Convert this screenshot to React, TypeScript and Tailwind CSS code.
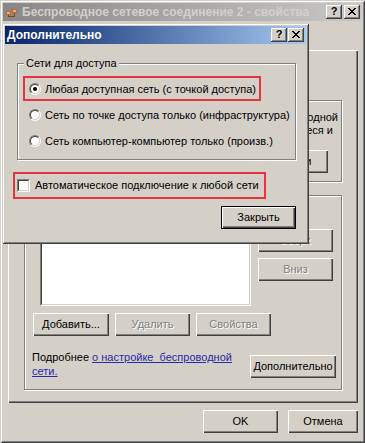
import React from "react";

function CapBtn({ kind }: { kind: "help" | "close" }) {
  const xPix: [number, number, number][] = [
    [0, 0, 2], [6, 0, 2],
    [1, 1, 2], [5, 1, 2],
    [2, 2, 4],
    [3, 3, 2],
    [2, 4, 4],
    [1, 5, 2], [5, 5, 2],
    [0, 6, 2], [6, 6, 2],
  ];
  return (
    <div className="w-[16px] h-[14px] bg-[#d4d0c8] flex items-center justify-center shadow-[inset_-1px_-1px_0_#404040,inset_1px_1px_0_#ffffff,inset_-2px_-2px_0_#808080]">
      {kind === "help" ? (
        <span className="font-bold text-[11px] leading-none text-black -mt-[1px]">?</span>
      ) : (
        <svg width="8" height="7" viewBox="0 0 8 7" shapeRendering="crispEdges" className="-mt-[1px]">
          {xPix.map(([x, y, w], i) => (
            <rect key={i} x={x} y={y} width={w} height={1} fill="#000" />
          ))}
        </svg>
      )}
    </div>
  );
}

function NetIcon() {
  return (
    <svg width="13" height="12" viewBox="0 0 13 12" shapeRendering="crispEdges">
      <rect x="1" y="5" width="5" height="4" fill="#c8661e" />
      <rect x="2" y="6" width="3" height="2" fill="#f2b36b" />
      <rect x="7" y="3" width="5" height="4" fill="#c8661e" />
      <rect x="8" y="4" width="3" height="2" fill="#f2b36b" />
      <rect x="3" y="9" width="1" height="2" fill="#7a4a22" />
      <rect x="9" y="7" width="1" height="4" fill="#7a4a22" />
      <rect x="3" y="10" width="7" height="1" fill="#7a4a22" />
    </svg>
  );
}

function Btn({
  label,
  className = "",
  disabled = false,
  def = false,
}: {
  label?: React.ReactNode;
  className?: string;
  disabled?: boolean;
  def?: boolean;
}) {
  const inner = (
    <div
      className={`h-full w-full flex items-center justify-center whitespace-nowrap bg-[#d4d0c8] shadow-[inset_1px_1px_0_#ffffff,inset_-1px_-1px_0_#404040,inset_-2px_-2px_0_#808080] ${
        disabled ? "text-[#808080] [text-shadow:1px_1px_0_#ffffff]" : "text-black"
      }`}
    >
      {label}
    </div>
  );
  if (def) return <div className={`border border-black ${className}`}>{inner}</div>;
  return <div className={className}>{inner}</div>;
}

function Radio({ checked = false }: { checked?: boolean }) {
  return (
    <div className="w-[12px] h-[12px] shrink-0 rounded-full border border-t-[#808080] border-l-[#808080] border-r-white border-b-white">
      <div className="w-full h-full rounded-full border border-t-[#404040] border-l-[#404040] border-r-[#d4d0c8] border-b-[#d4d0c8] bg-white flex items-center justify-center">
        {checked && <div className="w-[4px] h-[4px] rounded-full bg-black" />}
      </div>
    </div>
  );
}

function Check() {
  return (
    <div className="w-[13px] h-[13px] shrink-0 border border-t-[#808080] border-l-[#808080] border-r-white border-b-white">
      <div className="w-full h-full border border-t-[#404040] border-l-[#404040] border-r-[#d4d0c8] border-b-[#d4d0c8] bg-white" />
    </div>
  );
}

function Group({
  label,
  className = "",
  children,
}: {
  label?: string;
  className?: string;
  children?: React.ReactNode;
}) {
  return (
    <div
      className={`relative border border-[#808080] shadow-[inset_1px_1px_0_#ffffff,1px_1px_0_#ffffff] ${className}`}
    >
      {label && (
        <span className="absolute -top-[7px] left-[6px] px-[2px] bg-[#d4d0c8] leading-[13px] whitespace-nowrap">
          {label}
        </span>
      )}
      {children}
    </div>
  );
}

export default function App() {
  return (
    <div className="relative w-[365px] h-[443px] overflow-hidden bg-[#d4d0c8] p-[3px] flex flex-col font-['Liberation_Sans',Arial,sans-serif] text-[11px] leading-[13px] text-black shadow-[inset_1px_1px_0_#d4d0c8,inset_-1px_-1px_0_#404040,inset_2px_2px_0_#ffffff,inset_-2px_-2px_0_#808080]">
      {/* background window title bar (inactive) */}
      <div className="h-[18px] shrink-0 flex items-center pl-[2px] pr-[2px] bg-gradient-to-r from-[#888888] to-[#c8c8c8]">
        <NetIcon />
        <span className="ml-[4px] text-[12px] font-bold text-[#d4d0c8] whitespace-nowrap">
          Беспроводное сетевое соединение 2 - свойства
        </span>
        <div className="ml-auto flex gap-[2px]">
          <CapBtn kind="help" />
          <CapBtn kind="close" />
        </div>
      </div>

      {/* tab header strip (tabs lie under the dialog) */}
      <div className="h-[29px] shrink-0" />

      {/* tab panel */}
      <div className="ml-[5px] w-[350px] h-[353px] shrink-0 flex flex-col px-[16px] shadow-[inset_1px_1px_0_#ffffff,inset_-1px_-1px_0_#404040,inset_-2px_-2px_0_#808080]">
        <div className="mt-[14px] h-[16px] flex items-center">
          <Check />
        </div>

        <Group className="mt-[20px] h-[82px]">
          <div className="pt-[10px] pr-[3px] flex flex-col items-end">
            <div className="whitespace-nowrap">Для подключения к доступной беспроводной</div>
            <div className="whitespace-nowrap mr-[5px]">сети или отключения от нее, если она подключаеся и</div>
            <Btn label="Беспроводные сети" className="mt-[13px] mr-[10px] w-[134px] h-[23px]" />
          </div>
        </Group>

        <Group className="mt-[13px] h-[195px]">
          <div className="flex flex-col pl-[7px] pr-[5px] pt-[12px]">
            <div className="h-[13px]" />
            <div className="mt-[8px] flex h-[77px]">
              <div className="ml-[8px] w-[211px] h-full bg-white border border-t-[#808080] border-l-[#808080] border-r-white border-b-white">
                <div className="w-full h-full border border-t-[#404040] border-l-[#404040] border-r-[#d4d0c8] border-b-[#d4d0c8]" />
              </div>
              <div className="ml-[7px] flex flex-col gap-[6px]">
                <Btn label="Вверх" disabled className="w-[75px] h-[23px]" />
                <Btn label="Вниз" disabled className="w-[75px] h-[23px]" />
              </div>
            </div>
            <div className="mt-[7px] ml-[1px] flex gap-[6px]">
              <Btn label="Добавить..." className="w-[76px] h-[23px]" />
              <Btn label="Удалить" disabled className="w-[75px] h-[23px]" />
              <Btn label="Свойства" disabled className="w-[75px] h-[23px]" />
            </div>
            <div className="mt-[14px] flex justify-between">
              <div className="leading-[14px] whitespace-pre">
                Подробнее{" "}
                <span className="text-[#2a2aa8] underline">о настройке  беспроводной</span>
                {"\n"}
                <span className="text-[#2a2aa8] underline">сети.</span>
              </div>
              <Btn label="Дополнительно" className="mt-[5px] w-[86px] h-[23px]" />
            </div>
          </div>
        </Group>
      </div>

      {/* OK / Cancel */}
      <div className="mt-[7px] mr-[4px] flex justify-end gap-[10px]">
        <Btn label="OK" className="w-[75px] h-[23px]" />
        <Btn label="Отмена" className="w-[70px] h-[23px]" />
      </div>

      {/* Dialog window on top */}
      <div className="absolute left-[2px] top-[23px] w-[307px] h-[221px] bg-[#d4d0c8] p-[3px] flex flex-col shadow-[inset_1px_1px_0_#d4d0c8,inset_-1px_-1px_0_#404040,inset_2px_2px_0_#ffffff,inset_-2px_-2px_0_#808080]">
        <div className="h-[18px] shrink-0 flex items-center pl-[2px] pr-[2px] bg-gradient-to-r from-[#0a246a] to-[#a6caf0]">
          <span className="text-white font-bold text-[12px] whitespace-nowrap">Дополнительно</span>
          <div className="ml-auto flex gap-[1px]">
            <CapBtn kind="help" />
            <CapBtn kind="close" />
          </div>
        </div>
        <div className="flex flex-col pl-[12px] pr-[10px]">
          <Group label="Сети для доступа" className="mt-[19px] h-[97px]">
            <div className="pt-[12px] pl-[11px] flex flex-col">
              <div className="h-[26px] flex items-center gap-[4px]">
                <Radio checked />
                <span className="whitespace-nowrap">Любая доступная сеть (с точкой доступа)</span>
              </div>
              <div className="h-[26px] flex items-center gap-[4px]">
                <Radio />
                <span className="whitespace-nowrap">Сеть по точке доступа только (инфраструктура)</span>
              </div>
              <div className="h-[26px] flex items-center gap-[4px]">
                <Radio />
                <span className="whitespace-nowrap">Сеть компьютер-компьютер только (произв.)</span>
              </div>
            </div>
          </Group>
          <div className="mt-[17px] h-[16px] flex items-center gap-[5px]">
            <Check />
            <span className="whitespace-nowrap">Автоматическое подключение к любой сети</span>
          </div>
          <Btn def label="Закрыть" className="mt-[13px] self-end w-[75px] h-[23px]" />
        </div>
        <div className="absolute left-[21px] top-[53px] w-[238px] h-[25px] border-2 border-[#e3343f]" />
        <div className="absolute left-[11px] top-[149px] w-[253px] h-[27px] border-2 border-[#e3343f]" />
      </div>
    </div>
  );
}
